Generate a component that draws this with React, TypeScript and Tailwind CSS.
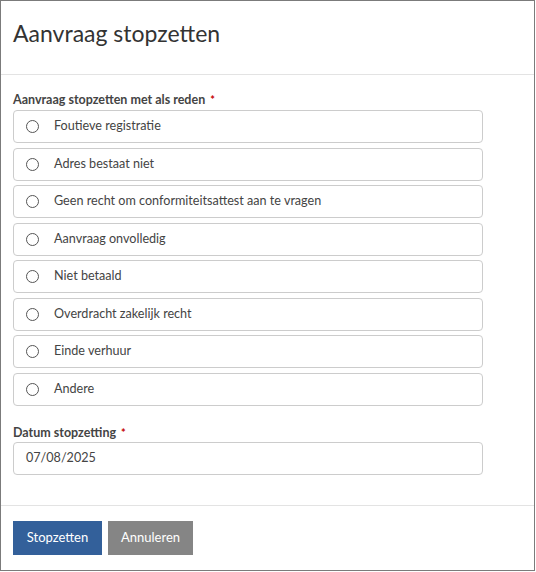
import React from "react";

const options = [
  "Foutieve registratie",
  "Adres bestaat niet",
  "Geen recht om conformiteitsattest aan te vragen",
  "Aanvraag onvolledig",
  "Niet betaald",
  "Overdracht zakelijk recht",
  "Einde verhuur",
  "Andere",
];

export default function App() {
  return (
    <div
      className="w-[535px] h-[571px] border border-[#7b7b7b] bg-white flex flex-col text-[#333]"
      style={{ fontFamily: "Lato, 'Open Sans', sans-serif" }}
    >
      <div className="h-[74px] border-b border-[#e3e3e3] px-[12px] pt-[18px] shrink-0">
        <h1 className="text-[23px] leading-[28px] text-[#333] font-normal">Aanvraag stopzetten</h1>
      </div>
      <div className="px-[12px] pt-[17px] h-[431px] shrink-0 border-b border-[#e3e3e3]">
        <div className="text-[12.5px] leading-[16px] font-bold text-[#444] flex items-center gap-[5px]">
          Aanvraag stopzetten met als reden
          <span className="text-[#c40000] text-[11px]">*</span>
        </div>
        <div className="mt-[2px] flex flex-col gap-[4.5px] w-[470px]">
          {options.map((o) => (
            <label
              key={o}
              className="h-[33px] border border-[#cccccc] rounded-[4px] flex items-center pl-[12px] text-[12.6px] text-[#444]"
            >
              <span className="w-[13px] h-[13px] rounded-full border border-[#555] bg-white shrink-0" />
              <span className="ml-[15px]">{o}</span>
            </label>
          ))}
        </div>
        <div className="mt-[19px] text-[12.5px] leading-[16px] font-bold text-[#444] flex items-center gap-[5px]">
          Datum stopzetting
          <span className="text-[#c40000] text-[11px]">*</span>
        </div>
        <div className="mt-[1px] w-[470px] h-[33px] border border-[#cccccc] rounded-[4px] flex items-center pl-[12px] text-[12.6px] text-[#444]">
          07/08/2025
        </div>
      </div>
      <div className="px-[12px] pt-[15px] flex gap-[6px]">
        <button className="h-[34px] w-[89px] bg-[#33609a] text-white text-[13px]">Stopzetten</button>
        <button className="h-[34px] w-[85px] bg-[#858585] text-white text-[13px]">Annuleren</button>
      </div>
    </div>
  );
}
